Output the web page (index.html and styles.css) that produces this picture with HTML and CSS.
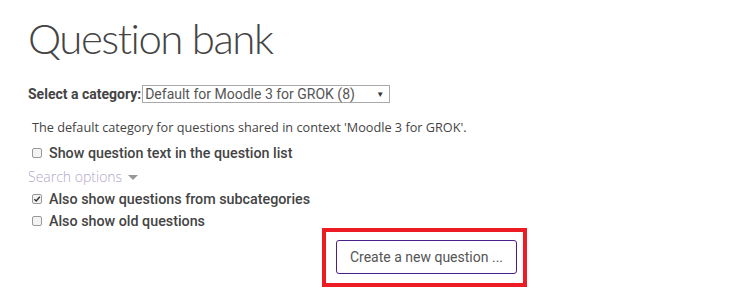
FILE: index.html
```html
<!DOCTYPE html>
<html>
<head>
<meta charset="utf-8">
<link rel="stylesheet" href="styles.css">
</head>
<body>
<div class="page">
  <h1 class="title">Question bank</h1>
  <div class="cat-row">
    <label class="cat-label">Select a category:</label>
    <div class="select">
      <span class="select-text">Default for Moodle 3 for GROK (8)</span>
      <span class="select-arrow">▼</span>
    </div>
  </div>
  <p class="desc">The default category for questions shared in context 'Moodle 3 for GROK'.</p>
  <div class="check-row first"><span class="box"></span><span class="check-label">Show question text in the question list</span></div>
  <div class="search-opts">Search options <span class="caret"></span></div>
  <div class="check-row"><span class="box checked"><svg viewBox="0 0 8 8" width="8" height="8"><path d="M1.3 4.2 L3.2 6 L6.8 1.8" fill="none" stroke="#333" stroke-width="1.4"/></svg></span><span class="check-label">Also show questions from subcategories</span></div>
  <div class="check-row"><span class="box"></span><span class="check-label">Also show old questions</span></div>
  <div class="btn-wrap">
    <div class="highlight">
      <button class="btn">Create a new question ...</button>
    </div>
  </div>
</div>
</body>
</html>
```

FILE: styles.css
```css
html, body {
  margin: 0;
  padding: 0;
  background: #fff;
}
.page {
  padding: 14px 0 0 28px;
  font-family: Roboto, "Liberation Sans", sans-serif;
  color: #373a3c;
  font-size: 14px;
}
.title {
  margin: 0;
  font-family: Lato, "Open Sans", sans-serif;
  font-weight: 300;
  font-size: 42px;
  line-height: 48px;
  color: #444;
  letter-spacing: -1.5px;
}
.cat-row {
  display: flex;
  align-items: center;
  margin-top: 23px;
  height: 18px;
}
.cat-label {
  font-weight: 700;
  font-size: 14px;
  color: #444;
}
.select {
  margin-left: 1px;
  width: 244px;
  height: 16px;
  border: 1px solid #a9a9a9;
  display: flex;
  align-items: center;
  justify-content: space-between;
  padding: 0 0 0 2px;
  box-sizing: content-box;
}
.select-text {
  font-size: 14px;
  color: #555;
  line-height: 16px;
}
.select-arrow {
  font-size: 8px;
  color: #333;
  margin-right: 5px;
}
.desc {
  margin: 15px 0 0 4px;
  font-family: "Open Sans", Roboto, sans-serif;
  font-size: 12.7px;
  color: #444;
  line-height: 18px;
}
.check-row {
  display: flex;
  align-items: center;
  height: 22px;
  margin-left: 4px;
}
.check-row.first { margin-top: 6px; }
.box {
  width: 8px;
  height: 8px;
  border: 1px solid #999;
  border-radius: 2px;
  background: #f3f3f3;
  margin-right: 7px;
  display: flex;
  align-items: center;
  justify-content: center;
}
.box svg { display: block; }
.check-label {
  font-weight: 500;
  font-size: 14.3px;
  color: #444;
}
.search-opts {
  margin-top: 2px;
  height: 22px;
  line-height: 22px;
  color: #b3a8c8;
  font-size: 14px;
  font-family: "Open Sans", Roboto, sans-serif;
  font-weight: 300;
  display: flex;
  align-items: center;
}
.caret {
  display: inline-block;
  margin-left: 6px;
  width: 0;
  height: 0;
  border-left: 5px solid transparent;
  border-right: 5px solid transparent;
  border-top: 5px solid #999;
}
.btn-wrap {
  display: flex;
  margin-top: -4px;
  padding-left: 294px;
}
.highlight {
  border: 4px solid #ed1c24;
  padding: 8px 6px 9px 10px;
  width: 181px;
}
.btn {
  display: block;
  width: 181px;
  height: 34px;
  border: 1px solid #4b1f8a;
  border-radius: 3px;
  background: #fff;
  font-family: Roboto, sans-serif;
  font-size: 14px;
  color: #555;
  padding: 0;
}
```
